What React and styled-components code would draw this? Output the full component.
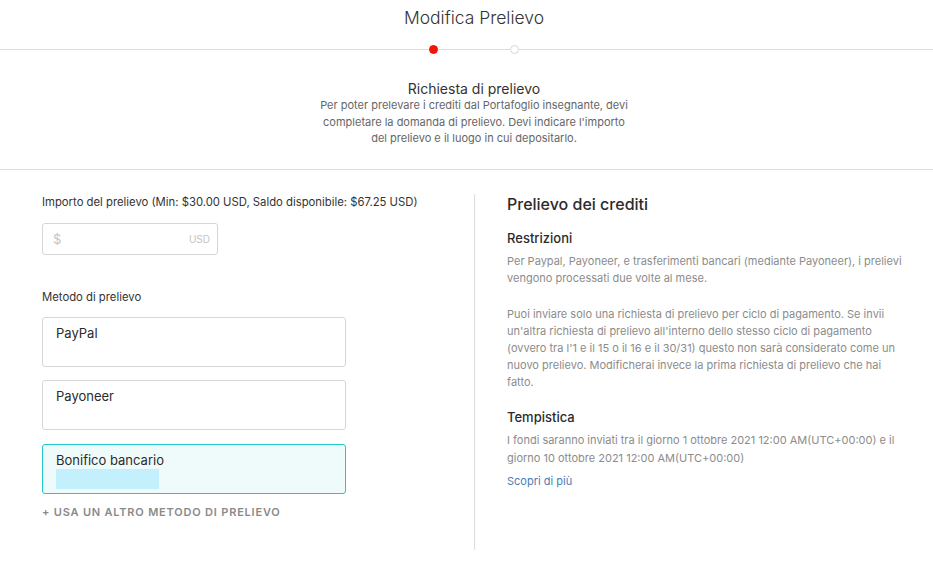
import React from "react";
import styled, { createGlobalStyle } from "styled-components";

const GlobalStyle = createGlobalStyle`
  html, body {
    margin: 0;
    padding: 0;
    background: #fff;
  }
  body {
    font-family: Inter, "Liberation Sans", Arial, sans-serif;
    color: #333;
    -webkit-font-smoothing: antialiased;
  }
  * { box-sizing: border-box; }
`;

const Page = styled.div`
  width: 933px;
  height: 563px;
  overflow: hidden;
`;

const Header = styled.header`
  padding-top: 6px;
  text-align: center;
`;

const Title = styled.h1`
  margin: 0;
  padding-left: 15px;
  font-size: 17.5px;
  line-height: 24px;
  font-weight: 300;
  color: #333;
`;

const Stepper = styled.div`
  display: flex;
  align-items: center;
  height: 10px;
  margin-top: 14px;
`;

const StepLine = styled.div`
  height: 1px;
  background: #dcdcdc;
  flex: ${(p) => (p.$grow ? 1 : "none")};
  width: ${(p) => (p.$width ? `${p.$width}px` : "auto")};
`;

const StepDot = styled.span`
  width: 9px;
  height: 9px;
  border-radius: 50%;
  flex: none;
  background: ${(p) => (p.$active ? "#f0140a" : "#fff")};
  border: 1px solid ${(p) => (p.$active ? "#f0140a" : "#d8d8d8")};
`;

const Intro = styled.section`
  padding: 27px 0 22px 15px;
  border-bottom: 1px solid #dcdcdc;
  text-align: center;
`;

const IntroTitle = styled.h2`
  margin: 0;
  font-size: 14px;
  line-height: 16px;
  font-weight: 400;
  color: #333;
`;

const IntroText = styled.p`
  margin: 0 auto;
  width: 316px;
  font-size: 11px;
  line-height: 16.5px;
  color: #666;
`;

const Main = styled.main`
  display: flex;
  padding: 24px 0 0 42px;
`;

const LeftCol = styled.div`
  width: 432px;
  flex: none;
`;

const RightCol = styled.aside`
  flex: 1;
  height: 356px;
  border-left: 1px solid #dcdcdc;
  padding: 0 26px 0 32px;
`;

const Label = styled.div`
  font-size: 11.3px;
  line-height: 16px;
  color: #333;
  margin-top: ${(p) => p.$top || 0}px;
`;

const AmountBox = styled.div`
  margin-top: 13px;
  width: 176px;
  height: 32px;
  border: 1px solid #d6d6d6;
  border-radius: 3px;
  display: flex;
  align-items: center;
  justify-content: space-between;
  padding: 0 7px 0 10px;
`;

const Dollar = styled.span`
  font-size: 13px;
  color: #c4c4c4;
`;

const Currency = styled.span`
  font-size: 10px;
  color: #c4c4c4;
`;

const MethodList = styled.div`
  display: flex;
  flex-direction: column;
  gap: 13.5px;
  margin-top: 12px;
  width: 304px;
`;

const MethodCard = styled.div`
  height: 50px;
  border: 1px solid ${(p) => (p.$selected ? "#20c9c9" : "#d6d6d6")};
  background: ${(p) => (p.$selected ? "#effbfb" : "#fff")};
  border-radius: 3px;
  padding: 7px 13px 0;
`;

const MethodName = styled.div`
  font-size: 13px;
  line-height: 17px;
  color: #2b2b2b;
`;

const Redacted = styled.div`
  width: 103px;
  height: 20px;
  background: #c4f0fd;
`;

const AddMethod = styled.div`
  margin-top: 10px;
  font-size: 11px;
  line-height: 16px;
  font-weight: 600;
  letter-spacing: 0.8px;
  color: #8a8a8a;
`;

const PanelTitle = styled.h3`
  margin: 0;
  font-size: 16px;
  line-height: 20px;
  font-weight: 500;
  color: #2b2b2b;
`;

const SubTitle = styled.h4`
  margin: ${(p) => p.$top || 0}px 0 0;
  font-size: 13px;
  line-height: 18px;
  font-weight: 500;
  color: #2b2b2b;
`;

const Para = styled.p`
  margin: ${(p) => p.$top || 0}px 0 0;
  font-size: 11px;
  line-height: ${(p) => p.$lh || 17}px;
  color: #8c8c8c;
`;

const MoreLink = styled.a`
  display: block;
  margin-top: 6px;
  font-size: 11px;
  line-height: 16px;
  color: #4d7cb8;
  text-decoration: none;
`;

const methods = [
  { name: "PayPal" },
  { name: "Payoneer" },
  { name: "Bonifico bancario", selected: true },
];

export default function App() {
  return (
    <Page>
      <GlobalStyle />
      <Header>
        <Title>Modifica Prelievo</Title>
        <Stepper>
          <StepLine $width={429} />
          <StepDot $active />
          <StepLine $width={72} />
          <StepDot />
          <StepLine $grow />
        </Stepper>
      </Header>

      <Intro>
        <IntroTitle>Richiesta di prelievo</IntroTitle>
        <IntroText>
          Per poter prelevare i crediti dal Portafoglio insegnante, devi
          completare la domanda di prelievo. Devi indicare l'importo del
          prelievo e il luogo in cui depositarlo.
        </IntroText>
      </Intro>

      <Main>
        <LeftCol>
          <Label>
            Importo del prelievo (Min: $30.00 USD, Saldo disponibile: $67.25 USD)
          </Label>
          <AmountBox>
            <Dollar>$</Dollar>
            <Currency>USD</Currency>
          </AmountBox>

          <Label $top={34}>Metodo di prelievo</Label>
          <MethodList>
            {methods.map((m) => (
              <MethodCard key={m.name} $selected={m.selected}>
                <MethodName>{m.name}</MethodName>
                {m.selected && <Redacted />}
              </MethodCard>
            ))}
          </MethodList>
          <AddMethod>+ USA UN ALTRO METODO DI PRELIEVO</AddMethod>
        </LeftCol>

        <RightCol>
          <PanelTitle>Prelievo dei crediti</PanelTitle>
          <SubTitle $top={15}>Restrizioni</SubTitle>
          <Para $top={6}>
            Per Paypal, Payoneer, e trasferimenti bancari (mediante Payoneer), i
            prelievi vengono processati due volte al mese.
          </Para>
          <Para $top={19}>
            Puoi inviare solo una richiesta di prelievo per ciclo di pagamento.
            Se invii un'altra richiesta di prelievo all'interno dello stesso
            ciclo di pagamento (ovvero tra l'1 e il 15 o il 16 e il 30/31)
            questo non sarà considerato come un nuovo prelievo. Modificherai
            invece la prima richiesta di prelievo che hai fatto.
          </Para>
          <SubTitle $top={17}>Tempistica</SubTitle>
          <Para $top={5} $lh={18}>
            I fondi saranno inviati tra il giorno 1 ottobre 2021 12:00
            AM(UTC+00:00) e il giorno 10 ottobre 2021 12:00 AM(UTC+00:00)
          </Para>
          <MoreLink href="#">Scopri di più</MoreLink>
        </RightCol>
      </Main>
    </Page>
  );
}
